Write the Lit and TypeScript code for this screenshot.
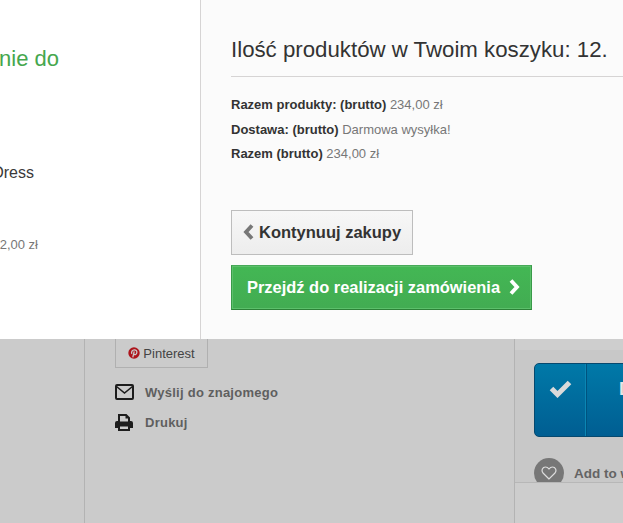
import { LitElement, html, css } from "lit";
import { customElement } from "lit/decorators.js";

@customElement("app-root")
export class AppRoot extends LitElement {
  static styles = css`
    :host { display: block; width: 623px; height: 523px; overflow: hidden; font-family: "Liberation Sans", Arial, sans-serif; background: #cbcbcb; }
    .modal { display: grid; grid-template-columns: 200px 1fr; height: 339px; }
    .left { background: #fff; border-right: 1px solid #d6d4d4; overflow: hidden; position: relative; width: 200px; box-sizing: content-box; }
    .added { position: absolute; right: 141px; top: 45px; margin: 0; font-size: 22px; line-height: 27px; font-weight: 400; color: #46a74e; white-space: nowrap; }
    .name { position: absolute; right: 166px; top: 164px; font-size: 16px; line-height: 18px; color: #3a3939; white-space: nowrap; }
    .price { position: absolute; right: 162px; top: 236px; font-size: 13px; line-height: 18px; color: #777; white-space: nowrap; }
    .right { background: #fbfbfb; padding: 35px 0 0 30px; min-width: 0; margin-left: 1px; }
    h2 { margin: 0; font-size: 22.25px; line-height: 29px; font-weight: 400; color: #333; padding-bottom: 12px; border-bottom: 1px solid #d6d4d4; white-space: nowrap; }
    .totals { margin-top: 16px; font-size: 13px; line-height: 24.5px; color: #777; }
    .totals b { color: #333; }
    .btns { margin-top: 43px; display: flex; flex-direction: column; align-items: flex-start; gap: 10px; }
    .btn { display: flex; align-items: center; box-sizing: border-box; height: 45px; font-weight: 700; white-space: nowrap; }
    .back { width: 182px; padding-left: 11px; gap: 5px; border: 1px solid #bdbdbd; color: #333; background: linear-gradient(#f7f7f7, #ededed); font-size: 16.5px; }
    .go { width: 301px; padding-left: 15px; gap: 9px; color: #fff; border: 1px solid #399a49; border-color: #47a958 #399a49 #2c8237; background: linear-gradient(#43b754, #42ac52); box-shadow: inset 0 0 0 1px #5cc06b; font-size: 16.45px; }
    .btn svg { display: block; flex: none; }
    .page { display: grid; grid-template-columns: 84px 431px 1fr; height: 184px; }
    .c2 { border-left: 1px solid #b3b3b3; border-right: 1px solid #b3b3b3; padding-left: 30px; }
    .pin { box-sizing: border-box; width: 93px; height: 29px; border: 1px solid #b0b0b0; border-top: 0; display: flex; align-items: center; justify-content: center; gap: 3px; font-size: 13px; color: #444; }
    .link { display: flex; align-items: center; font-size: 13px; letter-spacing: .25px; font-weight: 700; color: #5f5f5f; height: 30px; }
    .link svg { display: block; flex: none; }
    .links { margin-top: 9px; }
    .icon { width: 30px; }
    .c3 { min-width: 0; background: #cdcdcd; display: flex; flex-direction: column; }
    .strip { height: 11px; background: #cecece; }
    .box { flex: none; height: 133px; box-sizing: border-box; background: #c8c8c8; border-bottom: 1px solid #b7b7b7; padding: 13px 0 0 19px; overflow: hidden; }
    .cart { width: 120px; height: 74px; border-radius: 5px; box-sizing: border-box; border: 1px solid #06496f; background: linear-gradient(#0079a8, #005e92); display: flex; }
    .tick { flex: none; width: 51px; box-sizing: border-box; padding: 16px 0 0 14px; border-right: 1px solid #0b86b3; box-shadow: 1px 0 0 #00537f; }
    .tick svg { display: block; }
    .cart-label { padding: 14px 0 0 33px; font-size: 18px; line-height: 22px; font-weight: 700; color: #e4e4e4; white-space: nowrap; }
    .wish { display: flex; align-items: center; gap: 10px; margin-top: 21px; font-size: 13.5px; font-weight: 700; color: #646464; white-space: nowrap; }
    .heart { width: 30px; height: 30px; border-radius: 50%; background: #777; display: flex; align-items: center; justify-content: center; flex: none; }
  `;

  render() {
    return html`
      <div class="modal">
        <div class="left">
          <p class="added">nie do</p>
          <div class="name">Dress</div>
          <div class="price">2,00 zł</div>
        </div>
        <div class="right">
          <h2>Ilość produktów w Twoim koszyku: 12.</h2>
          <div class="totals">
            <div><b>Razem produkty: (brutto)</b> 234,00 zł</div>
            <div><b>Dostawa: (brutto)</b> Darmowa wysyłka!</div>
            <div><b>Razem (brutto)</b> 234,00 zł</div>
          </div>
          <div class="btns">
            <div class="btn back">
              <svg width="11" height="16" viewBox="0 0 11 16"><path d="M9 1.500 3 8 9 14.500" fill="none" stroke="#777" stroke-width="3.800"/></svg>
              Kontynuuj zakupy
            </div>
            <div class="btn go">
              Przejdź do realizacji zamówienia
              <svg width="11" height="16" viewBox="0 0 11 16"><path d="M2 1.500 8 8 2 14.500" fill="none" stroke="#fff" stroke-width="3.800"/></svg>
            </div>
          </div>
        </div>
      </div>
      <div class="page">
        <div></div>
        <div class="c2">
          <div class="pin">
            <svg width="12" height="12" viewBox="0 0 12 12"><circle cx="6" cy="6" r="5.700" fill="#ad141b"/><path d="M3.900 6.900C2.900 5 4.300 2.800 6.300 2.800 8.100 2.800 9.200 4.200 8.800 5.900 8.400 7.700 6.600 8.100 5.700 7M6.200 4.400 4.800 10.400" fill="none" stroke="#cbcbcb" stroke-width="1.300"/></svg>
            Pinterest
          </div>
          <div class="links">
            <div class="link"><span class="icon"><svg width="19" height="16" viewBox="0 0 19 16"><rect x="1" y="1" width="17" height="14" rx="1" fill="none" stroke="#1d1d1d" stroke-width="2"/><path d="M1.500 2.500 9.500 9 17.500 2.500" fill="none" stroke="#1d1d1d" stroke-width="1.600"/></svg></span>Wyślij do znajomego</div>
            <div class="link"><span class="icon"><svg width="18" height="17" viewBox="0 0 18 17"><path fill="#1d1d1d" d="M3 0h8.500L15 3.500V7h1a2 2 0 0 1 2 2v5h-3v3H3v-3H0V9a2 2 0 0 1 2-2h1zm2 2v5.500h8V4.500h-2.500V2zM5 12.500V15h8v-2.500z"/></svg></span>Drukuj</div>
          </div>
        </div>
        <div class="c3">
          <div class="strip"></div>
          <div class="box">
            <div class="cart">
              <div class="tick"><svg width="23" height="18" viewBox="0 0 23 18"><path d="M2.500 8.500 8.500 14.500 20.500 2.500" fill="none" stroke="#dadada" stroke-width="5"/></svg></div>
              <div class="cart-label">Do koszyka</div>
            </div>
            <div class="wish">
              <span class="heart"><svg width="16" height="14" viewBox="0 0 16 14"><path d="M8 13 2 7C0 4.500 1.500 1 4.500 1 6 1 7.300 2 8 3 8.700 2 10 1 11.500 1 14.500 1 16 4.500 14 7z" fill="none" stroke="#ddd" stroke-width="1.200"/></svg></span>
              Add to wishlist
            </div>
          </div>
        </div>
      </div>
    `;
  }
}
